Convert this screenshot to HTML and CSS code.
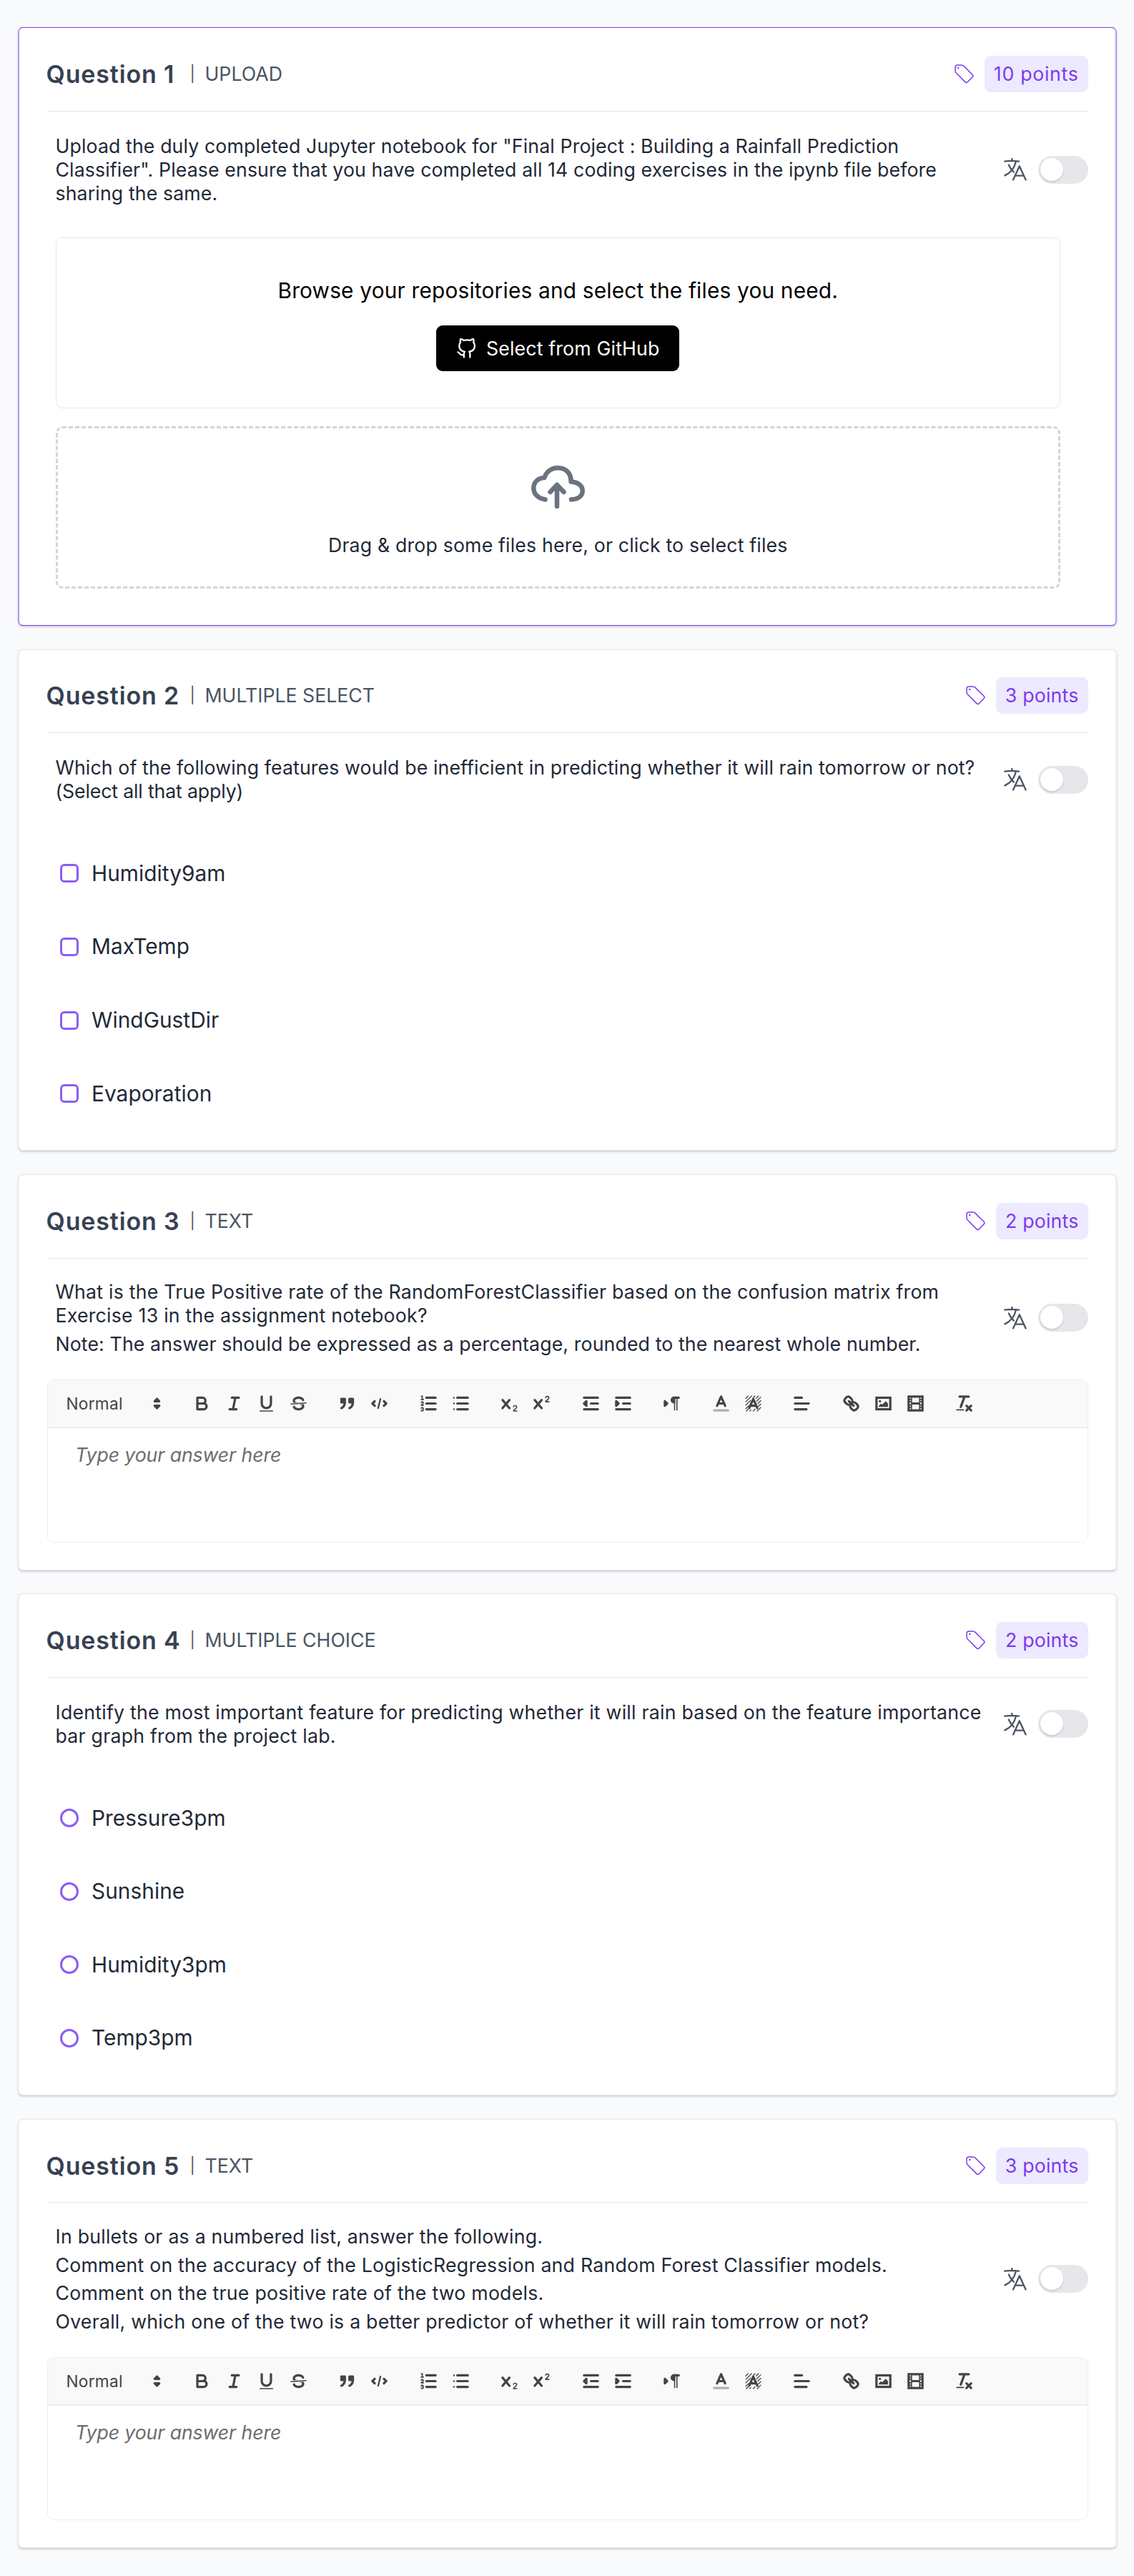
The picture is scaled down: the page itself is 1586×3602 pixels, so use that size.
FILE: index.html
```html
<!DOCTYPE html>
<html lang="en">
<head>
<meta charset="utf-8">
<title>Assignment questions</title>
<link rel="stylesheet" href="styles.css">
</head>
<body>
<svg class="sprite" aria-hidden="true">
  <symbol id="tag" viewBox="0 0 27 27"><path d="M1 4.200Q1 1 4.200 1H9.500Q11.500 1 13 2.400L25 14.200Q26.800 16 25 17.800L18.500 24.600Q16.700 26.400 14.900 24.600L2.300 12Q1 10.600 1 9Z"/><circle cx="5.200" cy="5" r=".5"/></symbol>
  <symbol id="translate" viewBox="0 0 32 32"><path d="M1.200 4.600Q11 3 21 4.600M11.300 1V4.200M17 4.400C15 13 9.500 20.500 1.400 24.400M6.800 9.500C8.300 13 10.500 16.500 13.800 19.600M13 30.400L21.800 11.200L30.600 30.400M16 24.600H27.700"/></symbol>
  <symbol id="github" viewBox="0 0 24 24"><path d="M9 19c-5 1.500-5-2.500-7-3m14 6v-3.870a3.370 3.370 0 0 0-.94-2.610c3.140-.35 6.440-1.540 6.440-7A5.440 5.440 0 0 0 20 4.770 5.070 5.070 0 0 0 19.910 1S18.730.65 16 2.480a13.380 13.380 0 0 0-7 0C6.270.65 5.090 1 5.090 1A5.070 5.070 0 0 0 5 4.770a5.440 5.440 0 0 0-1.500 3.780c0 5.420 3.300 6.610 6.440 7A3.370 3.370 0 0 0 9 18.130V22"/></symbol>
  <symbol id="arrows" viewBox="0 0 18 18"><polygon class="s f" points="7 11 9 13 11 11 7 11"/><polygon class="s f" points="7 7 9 5 11 7 7 7"/></symbol>
  <symbol id="bold" viewBox="0 0 18 18"><path class="s" d="M5,4H9.500A2.500,2.500,0,0,1,12,6.500v0A2.500,2.500,0,0,1,9.500,9H5V4Z"/><path class="s" d="M5,9h5.500A2.500,2.500,0,0,1,13,11.500v0A2.500,2.500,0,0,1,10.500,14H5V9Z"/></symbol>
  <symbol id="italic" viewBox="0 0 18 18"><path class="s" d="M7 4H13M5 14H11M8 14L10 4"/></symbol>
  <symbol id="underline" viewBox="0 0 18 18"><path class="s" d="M5,3V9a4.012,4.012,0,0,0,4,4H9a4.012,4.012,0,0,0,4-4V3"/><rect class="f" height="1" rx=".5" width="12" x="3" y="15"/></symbol>
  <symbol id="strike" viewBox="0 0 18 18"><path class="s t" d="M15.500 8.500L2.500 9.500"/><path class="f" d="M9.007,8C6.542,7.791,6,7.519,6,6.500,6,5.792,7.283,5,9,5c1.571,0,2.765.679,2.969,1.309a1,1,0,0,0,1.900-.617C13.356,4.106,11.354,3,9,3,6.200,3,4,4.538,4,6.500a3.200,3.200,0,0,0,.5,1.843Z"/><path class="f" d="M8.984,10C11.457,10.208,12,10.479,12,11.500c0,0.708-1.283,1.500-3,1.500-1.571,0-2.765-.679-2.969-1.309a1,1,0,1,0-1.900.617C4.644,13.894,6.646,15,9,15c2.800,0,5-1.538,5-3.500a3.200,3.200,0,0,0-.5-1.843Z"/></symbol>
  <symbol id="quote" viewBox="0 0 18 18"><rect class="s f" height="3" width="3" x="4" y="5"/><rect class="s f" height="3" width="3" x="11" y="5"/><path class="s f" d="M7,8c0,4.031-3,5-3,5"/><path class="s f" d="M14,8c0,4.031-3,5-3,5"/></symbol>
  <symbol id="code" viewBox="0 0 18 18"><path class="s" d="M5 7L3 9L5 11M13 7L15 9L13 11"/><path class="s m" d="M10 5L8 13"/></symbol>
  <symbol id="ol" viewBox="0 0 18 18"><path class="s" d="M7 4H15M7 9H15M7 14H15"/><path class="s t" d="M2.500 5.500H4.500"/><path class="f" d="M3.500,6A0.500,0.500,0,0,1,3,5.500V3.085l-0.276.138A0.500,0.500,0,0,1,2.053,3c-0.124-.247-0.023-0.324.224-0.447l1-.5A0.500,0.500,0,0,1,4,2.500v3A0.500,0.500,0,0,1,3.500,6Z"/><path class="s t" d="M4.500,10.500h-2c0-.234,1.850-1.076,1.850-2.234A0.959,0.959,0,0,0,2.500,8.156"/><path class="s t" d="M2.500,14.846a0.959,0.959,0,0,0,1.850-.109A0.700,0.700,0,0,0,3.750,14a0.688,0.688,0,0,0,.6-0.736,0.959,0.959,0,0,0-1.850-.109"/></symbol>
  <symbol id="ul" viewBox="0 0 18 18"><path class="s" d="M6 4H15M6 9H15M6 14H15"/><path class="s dots" d="M3 4H3M3 9H3M3 14H3"/></symbol>
  <symbol id="sub" viewBox="0 0 18 18"><path class="s" d="M3 6L9 13M9 6L3 13"/><path class="s t" d="M12.500 11.800C12.900 10.500 15.300 10.500 15.300 12.100C15.300 13.700 12.500 14.300 12.500 15.500H15.500"/></symbol>
  <symbol id="sup" viewBox="0 0 18 18"><path class="s" d="M3 6L9 13M9 6L3 13"/><path class="s t" d="M12.500 3.800C12.900 2.500 15.300 2.500 15.300 4.100C15.300 5.700 12.500 6.300 12.500 7.500H15.500"/></symbol>
  <symbol id="outdent" viewBox="0 0 18 18"><path class="s" d="M3 14H15M3 4H15M9 9H15"/><polygon class="s f" points="5 7 5 11 3 9"/></symbol>
  <symbol id="indent" viewBox="0 0 18 18"><path class="s" d="M3 14H15M3 4H15M9 9H15"/><polygon class="s f" points="3 7 3 11 5 9"/></symbol>
  <symbol id="direction" viewBox="0 0 18 18"><polygon class="s f" points="3 11 5 9 3 7"/><path class="s" d="M15 4H11"/><path class="f" d="M11,3a3,3,0,0,0,0,6h1V3H11Z"/><rect class="f" height="11" width="1" x="11" y="4"/><rect class="f" height="11" width="1" x="13" y="4"/></symbol>
  <symbol id="color" viewBox="0 0 18 18"><path class="s faint" d="M3 15H15"/><path class="s" d="M5.500 11L9 3L12.500 11M11.630 9H6.380"/></symbol>
  <symbol id="background" viewBox="0 0 18 18"><path class="s hatch" d="M2.500 4.500L4.500 2.500M2.500 7.500L7.500 2.500M2.500 10.500L6.500 6.500M9 4L10.500 2.500M2.500 13.500L5 11M11.500 4.500L13.500 2.500M12 7L15.500 3.500M3 15.500L4.500 14M13 9L15.500 6.500M13.500 11.500L15.500 9.500M7 14.500L6 15.500M10.500 14L9 15.500M15.500 12.500L12.500 15.500"/><path class="s" d="M5.500 13L9 5L12.500 13M11.630 11H6.380"/></symbol>
  <symbol id="align" viewBox="0 0 18 18"><path class="s" d="M3 9H15M3 14H13M3 4H9"/></symbol>
  <symbol id="link" viewBox="0 0 18 18"><path class="s" d="M7 7L11 11"/><path class="s" d="M8.900,4.577a3.476,3.476,0,0,1,.36,4.679A3.476,3.476,0,0,1,4.577,8.900C3.185,7.500,2.035,6.400,4.217,4.217S7.500,3.185,8.900,4.577Z"/><path class="s" d="M13.423,9.100a3.476,3.476,0,0,0-4.679-.36,3.476,3.476,0,0,0,.36,4.679c1.392,1.392,2.500,2.542,4.679.36S14.815,10.500,13.423,9.100Z"/></symbol>
  <symbol id="image" viewBox="0 0 18 18"><rect class="s sq" height="10" width="12" x="3" y="4"/><circle class="f" cx="6" cy="7" r="1"/><polygon class="f" points="5 12 5 11 7 9 8 10 11 7 13 9 13 12"/></symbol>
  <symbol id="video" viewBox="0 0 18 18"><rect class="s sq" height="12" width="12" x="3" y="3"/><path class="f" d="M5 3h1v12h-1ZM12 3h1v12h-1ZM5 8h8v2h-8ZM3 5h3v1h-3ZM3 7h3v1h-3ZM3 10h3v1h-3ZM3 12h3v1h-3ZM12 5h3v1h-3ZM12 7h3v1h-3ZM12 10h3v1h-3ZM12 12h3v1h-3Z"/></symbol>
  <symbol id="clean" viewBox="0 0 18 18"><path class="s" d="M5 3H13M6 12L9.350 3M11 11L15 15M15 11L11 15"/><rect class="f" height="1" rx=".5" width="7" x="2" y="14"/></symbol>
</svg>

<main class="questions">
  <section class="card active">
    <header class="head">
      <h2>Question 1</h2><span class="sep">|</span><span class="kind">UPLOAD</span>
      <svg class="tag"><use href="#tag"/></svg><span class="points ten">10 points</span>
    </header>
    <div class="prompt">
      <div class="text"><p>Upload the duly completed Jupyter notebook for "Final Project : Building a Rainfall Prediction<br>Classifier". Please ensure that you have completed all 14 coding exercises in the ipynb file before<br>sharing the same.</p></div>
      <svg class="translate"><use href="#translate"/></svg><span class="toggle"></span>
    </div>
    <div class="uploads">
      <div class="repo">
        <p>Browse your repositories and select the files you need.</p>
        <button class="github"><svg><use href="#github"/></svg>Select from GitHub</button>
      </div>
      <div class="drop">
        <svg class="cloud" viewBox="0 0 75 60"><path d="M19.500 47.500C10 46 3.300 40 3.300 31.500C3.300 23 9.500 17.500 18.400 17C20.500 9 28 3.300 37.500 3.300C48 3.300 56 10.500 55.500 22.500C64.500 23 71.700 27.500 71.700 35.500C71.700 42.500 65.500 47 56 47.500M36 57V29"/><path class="tip" d="M36 27L26.500 37M36 27L45.500 37"/></svg>
        <p>Drag &amp; drop some files here, or click to select files</p>
      </div>
    </div>
  </section>

  <section class="card">
    <header class="head">
      <h2>Question 2</h2><span class="sep">|</span><span class="kind">MULTIPLE SELECT</span>
      <svg class="tag"><use href="#tag"/></svg><span class="points">3 points</span>
    </header>
    <div class="prompt">
      <div class="text"><p>Which of the following features would be inefficient in predicting whether it will rain tomorrow or not?<br><span class="tight">(Select all that apply)</span></p></div>
      <svg class="translate"><use href="#translate"/></svg><span class="toggle"></span>
    </div>
    <ul class="options">
      <li><i class="box"></i>Humidity9am</li>
      <li><i class="box"></i>MaxTemp</li>
      <li><i class="box"></i>WindGustDir</li>
      <li><i class="box"></i>Evaporation</li>
    </ul>
  </section>

  <section class="card written">
    <header class="head">
      <h2>Question 3</h2><span class="sep">|</span><span class="kind">TEXT</span>
      <svg class="tag"><use href="#tag"/></svg><span class="points">2 points</span>
    </header>
    <div class="prompt">
      <div class="text"><p class="wide">What is the True Positive rate of the RandomForestClassifier based on the confusion matrix from<br>Exercise 13 in the assignment notebook?</p><p>Note: The answer should be expressed as a percentage, rounded to the nearest whole number.</p></div>
      <svg class="translate"><use href="#translate"/></svg><span class="toggle"></span>
    </div>
    <div class="editor">
      <div class="toolbar">
        <span class="picker">Normal<svg><use href="#arrows"/></svg></span>
        <span class="group"><svg><use href="#bold"/></svg><svg><use href="#italic"/></svg><svg><use href="#underline"/></svg><svg><use href="#strike"/></svg></span>
        <span class="group"><svg><use href="#quote"/></svg><svg><use href="#code"/></svg></span>
        <span class="group"><svg><use href="#ol"/></svg><svg><use href="#ul"/></svg></span>
        <span class="group"><svg><use href="#sub"/></svg><svg><use href="#sup"/></svg></span>
        <span class="group"><svg><use href="#outdent"/></svg><svg><use href="#indent"/></svg></span>
        <span class="group"><svg><use href="#direction"/></svg></span>
        <span class="group"><svg><use href="#color"/></svg><svg><use href="#background"/></svg></span>
        <span class="group"><svg><use href="#align"/></svg></span>
        <span class="group"><svg><use href="#link"/></svg><svg><use href="#image"/></svg><svg><use href="#video"/></svg></span>
        <span class="group"><svg><use href="#clean"/></svg></span>
      </div>
      <div class="answer">Type your answer here</div>
    </div>
  </section>

  <section class="card">
    <header class="head">
      <h2>Question 4</h2><span class="sep">|</span><span class="kind">MULTIPLE CHOICE</span>
      <svg class="tag"><use href="#tag"/></svg><span class="points">2 points</span>
    </header>
    <div class="prompt">
      <div class="text"><p class="wide">Identify the most important feature for predicting whether it will rain based on the feature importance<br>bar graph from the project lab.</p></div>
      <svg class="translate"><use href="#translate"/></svg><span class="toggle"></span>
    </div>
    <ul class="options">
      <li><i class="box round"></i>Pressure3pm</li>
      <li><i class="box round"></i>Sunshine</li>
      <li><i class="box round"></i>Humidity3pm</li>
      <li><i class="box round"></i>Temp3pm</li>
    </ul>
  </section>

  <section class="card written">
    <header class="head">
      <h2>Question 5</h2><span class="sep">|</span><span class="kind">TEXT</span>
      <svg class="tag"><use href="#tag"/></svg><span class="points">3 points</span>
    </header>
    <div class="prompt">
      <div class="text wide"><p>In bullets or as a numbered list, answer the following.</p><p>Comment on the accuracy of the LogisticRegression and Random Forest Classifier models.</p><p>Comment on the true positive rate of the two models.</p><p>Overall, which one of the two is a better predictor of whether it will rain tomorrow or not?</p></div>
      <svg class="translate"><use href="#translate"/></svg><span class="toggle"></span>
    </div>
    <div class="editor">
      <div class="toolbar">
        <span class="picker">Normal<svg><use href="#arrows"/></svg></span>
        <span class="group"><svg><use href="#bold"/></svg><svg><use href="#italic"/></svg><svg><use href="#underline"/></svg><svg><use href="#strike"/></svg></span>
        <span class="group"><svg><use href="#quote"/></svg><svg><use href="#code"/></svg></span>
        <span class="group"><svg><use href="#ol"/></svg><svg><use href="#ul"/></svg></span>
        <span class="group"><svg><use href="#sub"/></svg><svg><use href="#sup"/></svg></span>
        <span class="group"><svg><use href="#outdent"/></svg><svg><use href="#indent"/></svg></span>
        <span class="group"><svg><use href="#direction"/></svg></span>
        <span class="group"><svg><use href="#color"/></svg><svg><use href="#background"/></svg></span>
        <span class="group"><svg><use href="#align"/></svg></span>
        <span class="group"><svg><use href="#link"/></svg><svg><use href="#image"/></svg><svg><use href="#video"/></svg></span>
        <span class="group"><svg><use href="#clean"/></svg></span>
      </div>
      <div class="answer">Type your answer here</div>
    </div>
  </section>
</main>
</body>
</html>
```
FILE: styles.css
```css
* { box-sizing: border-box; }
body {
  margin: 0;
  background: #f9fafc;
  color: #1f2937;
  font: 26.7px/33px Inter, "Liberation Sans", sans-serif;
  letter-spacing: .12px;
}
h2, p, ul { margin: 0; padding: 0; }
svg { flex: none; }
.sprite { display: none; }

.questions {
  display: flex;
  flex-direction: column;
  gap: 32.6px;
  padding: 38px 24px 38px 25px;
}
.card {
  background: #fff;
  border: solid;
  border-width: 1px 2px;
  border-color: #e5e7eb #eff0f3;
  border-radius: 7px;
  padding: 39px 38.5px 0;
  box-shadow: 0 1.6px 3px rgba(0, 0, 0, .14), 0 1px 2px rgba(0, 0, 0, .05);
}
.active { border-color: #7c3aed #b794fb; }

.head {
  display: flex;
  align-items: center;
  height: 77.5px;
  padding-bottom: 26px;
  border-bottom: 1px solid #e5e7eb;
}
h2 {
  width: 201px;
  margin-left: -1px;
  color: #374151;
  font-size: 34px;
  line-height: 51px;
  font-weight: 600;
  letter-spacing: .85px;
  white-space: nowrap;
}
.sep { width: 21px; color: #4b5563; font-size: 22px; }
.kind { color: #4b5563; flex: 1; letter-spacing: 0; }
.tag { width: 27px; height: 27px; fill: none; stroke: #7c3aed; stroke-width: 1.5; }
.points {
  margin-left: 15px;
  padding: 9px 13px;
  border-radius: 9px;
  background: #ede9fe;
  color: #7c3aed;
  letter-spacing: .2px;
}
.ten { letter-spacing: .7px; }

.prompt { display: flex; align-items: center; padding-top: 32px; }
.text { flex: 1; padding-left: 12px; white-space: nowrap; }
.text p + p { margin-top: 6.7px; }
.tight { letter-spacing: -.15px; }
.wide { letter-spacing: .23px; }
.translate {
  width: 32px;
  height: 32px;
  fill: none;
  stroke: #4b5563;
  stroke-width: 2.3;
  stroke-linecap: round;
  stroke-linejoin: round;
}
.toggle {
  width: 70px;
  height: 39px;
  margin-left: 16px;
  padding: 3px;
  border-radius: 20px;
  background: #e5e7eb;
}
.toggle::before {
  content: "";
  display: block;
  width: 32px;
  height: 32px;
  border-radius: 50%;
  background: #fff;
  box-shadow: 0 1.5px 3px rgba(0, 0, 0, .15);
}

.uploads {
  display: flex;
  flex-direction: column;
  gap: 25px;
  padding: 45.5px 38.5px 51px 12px;
}
.repo, .drop { display: flex; flex-direction: column; align-items: center; }
.repo {
  height: 239px;
  padding-top: 57px;
  border: 1px solid #e7e8ec;
  border-radius: 9px;
  color: #000;
  font-size: 29.8px;
  letter-spacing: .2px;
}
.github {
  display: flex;
  align-items: center;
  justify-content: center;
  gap: 13px;
  width: 340px;
  height: 64px;
  margin-top: 32px;
  border: 0;
  border-radius: 9px;
  background: #000;
  color: #fff;
  font: 26.7px/33px Inter, "Liberation Sans", sans-serif;
  letter-spacing: .17px;
}
.github svg { width: 29px; height: 29px; fill: none; stroke: #fff; stroke-width: 1.9; stroke-linecap: round; stroke-linejoin: round; }
.drop {
  height: 227px;
  padding-top: 52px;
  border: 3px dashed #d1d5db;
  border-radius: 9px;
}
.cloud { width: 75px; height: 60px; margin: 0 0 34.5px 1px; fill: none; stroke: #6b7280; stroke-width: 6.5; stroke-linecap: round; stroke-linejoin: round; }
.drop p { letter-spacing: .17px; }

.options { list-style: none; padding: 47px 0 28px 18.5px; font-size: 29.8px; letter-spacing: .05px; }
.options li { display: flex; align-items: center; height: 102.6px; }
.box { width: 26px; height: 26px; margin-right: 18px; border: 3px solid #8b5cf6; border-radius: 6px; }
.round { border-radius: 50%; }

.written { padding-bottom: 38px; }
.written .prompt { padding-top: 30.5px; }
.editor { margin-top: 33.5px; border: 1.6px solid #eeeeef; border-radius: 9px; overflow: hidden; }
.toolbar {
  display: flex;
  align-items: center;
  gap: 23.5px;
  height: 67px;
  padding-left: 13px;
  border-bottom: 2px solid #eeeeef;
  background: #f9f9f9;
}
.picker {
  display: flex;
  align-items: center;
  justify-content: space-between;
  width: 156.5px;
  padding: 0 2px 0 13px;
  color: #444;
  font-size: 22.7px;
  letter-spacing: .25px;
}
.toolbar svg { width: 29px; height: 29px; }
.group { display: flex; gap: 16px; padding: 0 8px; }
.answer { height: 158.5px; padding: 21px 38.5px; color: #6d6d6d; font-style: italic; letter-spacing: -.1px; }

.s { fill: none; stroke: #444; stroke-width: 2; stroke-linecap: round; stroke-linejoin: round; }
.f { fill: #444; }
.t { stroke-width: 1; }
.m { stroke-width: 1.4; }
.sq { stroke-linejoin: miter; }
.faint { opacity: .4; }
.hatch { stroke-width: .8; }
.dots { stroke-width: 1.5; }
```
